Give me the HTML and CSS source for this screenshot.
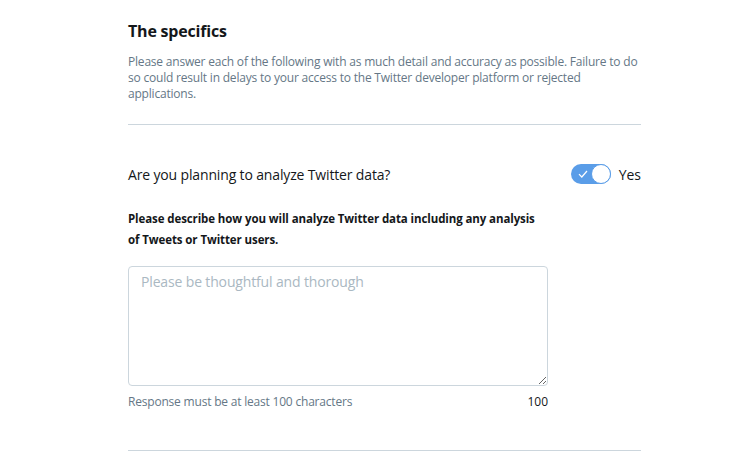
FILE: index.html
```html
<!DOCTYPE html>
<html>
<head>
<meta charset="utf-8">
<link rel="stylesheet" href="styles.css">
</head>
<body>
<main class="page">
  <section class="intro">
    <h2 class="title">The specifics</h2>
    <p class="desc">Please answer each of the following with as much detail and accuracy as possible. Failure to do so could result in delays to your access to the Twitter developer platform or rejected applications.</p>
  </section>
  <section class="question">
    <div class="q-row">
      <span class="q-text">Are you planning to analyze Twitter data?</span>
      <label class="toggle-wrap">
        <span class="toggle">
          <svg class="check" width="10" height="8" viewBox="0 0 10 8"><path d="M1 4.2 L3.8 7 L9 1" fill="none" stroke="#fff" stroke-width="1.2"/></svg>
          <span class="knob"></span>
        </span>
        <span class="yes">Yes</span>
      </label>
    </div>
    <p class="field-label">Please describe how you will analyze Twitter data including any analysis of Tweets or Twitter users.</p>
    <div class="field">
      <textarea class="area" placeholder="Please be thoughtful and thorough"></textarea>
      <div class="helper">
        <span>Response must be at least 100 characters</span>
        <span class="count">100</span>
      </div>
    </div>
  </section>
</main>
</body>
</html>
```
FILE: styles.css
```css
* { box-sizing: border-box; }
html, body { margin: 0; background: #fff; }
body {
  font-family: "Open Sans", "Noto Sans", sans-serif;
  color: #14171a;
}
.page {
  width: 513px;
  margin-left: 128px;
  padding-top: 19px;
}
.intro {
  border-bottom: 1px solid #ccd6dd;
  padding-bottom: 22px;
}
.title {
  margin: 0;
  font-size: 16px;
  font-weight: 700;
  line-height: 24px;
  letter-spacing: -0.2px;
}
.desc {
  margin: 11px 0 0;
  font-size: 12px;
  line-height: 16px;
  color: #657786;
  letter-spacing: -0.2px;
}
.question {
  padding-top: 37px;
  border-bottom: 1px solid #ccd6dd;
  padding-bottom: 40px;
}
.q-row {
  display: flex;
  justify-content: space-between;
  align-items: center;
  height: 24px;
}
.q-text { font-size: 14px; letter-spacing: -0.15px; }
.toggle-wrap { display: flex; align-items: center; gap: 8px; }
.toggle {
  position: relative;
  width: 40px;
  height: 20px;
  border-radius: 10px;
  background: #5a9de8;
  display: flex;
  align-items: center;
}
.check { margin-left: 7px; }
.knob {
  position: absolute;
  right: 0;
  top: 0;
  width: 20px;
  height: 20px;
  border-radius: 50%;
  background: #fff;
  border: 1.5px solid #5a9de8;
}
.yes { font-size: 14px; }
.field-label {
  width: 420px;
  margin: 22px 0 0;
  font-size: 11.5px;
  font-weight: 700;
  line-height: 21px;
  letter-spacing: -0.1px;
}
.field { width: 420px; margin-top: 16px; }
.area {
  display: block;
  width: 420px;
  height: 120px;
  border: 1px solid #ccd6dd;
  border-radius: 4px;
  padding: 5px 12px;
  font-family: inherit;
  font-size: 14px;
  line-height: 20px;
  letter-spacing: -0.15px;
  resize: vertical;
}
.area::placeholder { color: #aab8c2; }
.helper {
  display: flex;
  justify-content: space-between;
  font-size: 12px;
  color: #657786;
  margin-top: 8px;
  line-height: 16px;
  letter-spacing: -0.2px;
}
.count { color: #14171a; letter-spacing: 0; }
```
